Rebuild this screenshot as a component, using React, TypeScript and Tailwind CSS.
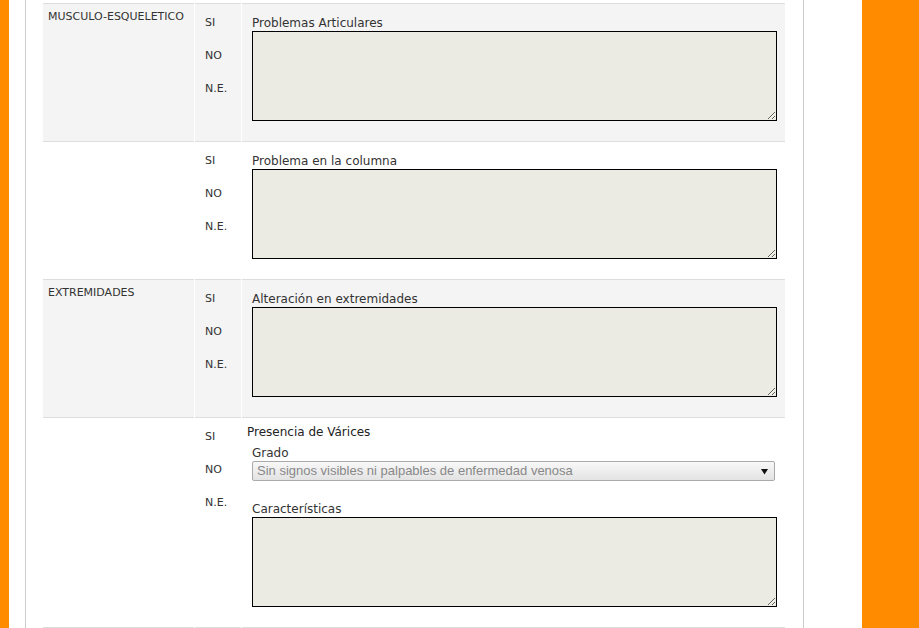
import React from "react";

const font = { fontFamily: '"DejaVu Sans", Verdana, sans-serif' };

function Options() {
  return (
    <div className="pl-[10px] pt-[2px] text-[11px] text-[#333]">
      {["SI", "NO", "N.E."].map((o) => (
        <div key={o} className="h-[33px] leading-[33px]">
          {o}
        </div>
      ))}
    </div>
  );
}

function Area() {
  return (
    <textarea
      disabled
      className="block w-[525px] h-[90px] border border-black bg-[#ebebe4] resize-y"
    />
  );
}

function Row({
  title,
  label,
  shaded,
}: {
  title?: string;
  label: string;
  shaded?: boolean;
}) {
  const bg = shaded ? "bg-[#f4f4f4]" : "bg-white";
  return (
    <div className="flex gap-[1px] h-[138px]">
      <div className={`w-[151px] border-b border-[#ddd] ${bg}`}>
        {title && (
          <div className="pl-[5px] pt-[5px] text-[11px] leading-[15px] text-[#333]">
            {title}
          </div>
        )}
      </div>
      <div className={`w-[46px] border-b border-[#ddd] ${bg}`}>
        <Options />
      </div>
      <div className={`flex-1 border-b border-[#ddd] pl-[10px] ${bg}`}>
        <div className="pt-[11px] text-[12px] leading-[16px] text-[#333]">{label}</div>
        <Area />
      </div>
    </div>
  );
}

export default function App() {
  return (
    <div className="flex h-[628px] overflow-hidden bg-white" style={font}>
      <div className="w-[9px] bg-[#ff8c00]" />
      <div className="flex-1 pl-[16px]">
        <div className="w-[779px] h-full border-x border-[#ccc] pl-[17px] pr-[18px]">
          <div className="pt-[3px]">
            <div className="flex gap-[1px]">
              <div className="w-[151px] border-t border-[#ddd]" />
              <div className="w-[46px] border-t border-[#ddd]" />
              <div className="flex-1 border-t border-[#ddd]" />
            </div>
            <Row title="MUSCULO-ESQUELETICO" label="Problemas Articulares" shaded />
            <Row label="Problema en la columna" />
            <Row title="EXTREMIDADES" label="Alteración en extremidades" shaded />
            <div className="flex gap-[1px] h-[210px]">
              <div className="w-[151px] border-b border-[#ddd]" />
              <div className="w-[46px] border-b border-[#ddd]">
                <Options />
              </div>
              <div className="flex-1 border-b border-[#ddd] pl-[5px]">
                <div className="pt-[6px] text-[12px] leading-[17px] text-[#222]">
                  Presencia de Várices
                </div>
                <div className="pl-[5px]">
                  <div className="pt-[4px] text-[12px] leading-[16px] text-[#333]">Grado</div>
                  <div
                    className="flex items-center justify-between w-[523px] h-[20px] border border-[#aaa] rounded-[2px] bg-gradient-to-b from-[#f8f8f8] to-[#e3e3e3] pl-[4px] pr-[6px] text-[13px] text-[#888]"
                    style={{ fontFamily: '"Liberation Sans", Arial, sans-serif' }}
                  >
                    <span>Sin signos visibles ni palpables de enfermedad venosa</span>
                    <svg width="7" height="7" viewBox="0 0 7 7">
                      <path d="M0 1h7L3.5 6.5z" fill="#111" />
                    </svg>
                  </div>
                  <div className="pt-[20px] text-[12px] leading-[16px] text-[#333]">
                    Características
                  </div>
                  <Area />
                </div>
              </div>
            </div>
          </div>
        </div>
      </div>
      <div className="w-[57px] bg-[#ff8c00]" />
    </div>
  );
}
